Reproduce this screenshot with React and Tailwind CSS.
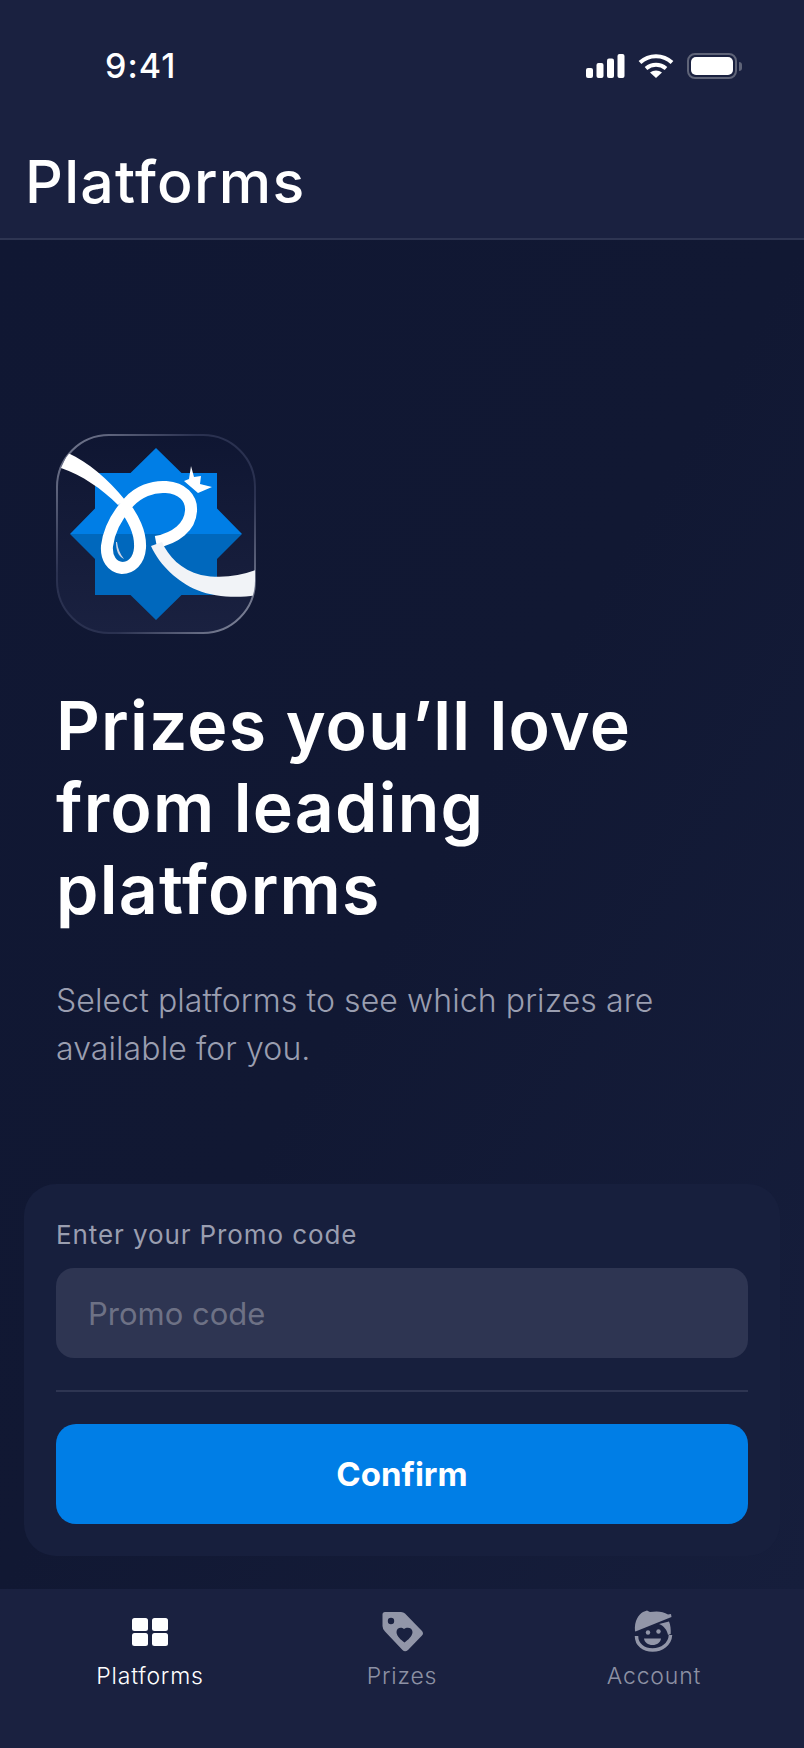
import React from 'react';

const SignalIcon = () => (
  <svg width="39" height="24" viewBox="0 0 39 24" fill="#fff">
    <rect x="0" y="14" width="7" height="10" rx="2" />
    <rect x="10.500" y="9" width="7" height="15" rx="2" />
    <rect x="21" y="4.500" width="7" height="19.500" rx="2" />
    <rect x="31.500" y="0" width="7" height="24" rx="2" />
  </svg>
);

const WifiIcon = () => (
  <svg width="36" height="24" viewBox="0 0 36 24" fill="none" stroke="#fff" strokeWidth="4">
    <path d="M2 8.500 C11 0 25 0 34 8.500" />
    <path d="M8 14.500 C14 9.500 22 9.500 28 14.500" />
    <path d="M18 24 L12 18.500 C15.500 15.700 20.500 15.700 24 18.500 Z" fill="#fff" stroke="none" />
  </svg>
);

const BatteryIcon = () => (
  <div className="flex items-center gap-[2px]">
    <div className="w-[50px] h-[26px] rounded-[8px] border-2 border-[#5f6478] p-[2px]">
      <div className="w-full h-full rounded-[5px] bg-white" />
    </div>
    <div className="w-[3px] h-[9px] rounded-r-full bg-[#5f6478]" />
  </div>
);

const AppLogo = () => (
  <svg width="200" height="200" viewBox="0 0 200 200" className="block">
    <defs>
      <linearGradient id="tile" x1="0" y1="0" x2="0" y2="1">
        <stop offset="0" stopColor="#0f1632" />
        <stop offset="1" stopColor="#1a2140" />
      </linearGradient>
      <linearGradient id="edge" x1="0" y1="0" x2="1" y2="1">
        <stop offset="0" stopColor="#7d8297" />
        <stop offset="0.35" stopColor="#2a3150" />
        <stop offset="0.65" stopColor="#2a3150" />
        <stop offset="1" stopColor="#8b90a3" />
      </linearGradient>
      <linearGradient id="star" x1="0" y1="0" x2="0" y2="1">
        <stop offset="0" stopColor="#007ee6" />
        <stop offset="0.5" stopColor="#007ee6" />
        <stop offset="0.5" stopColor="#0068bd" />
        <stop offset="1" stopColor="#0068bd" />
      </linearGradient>
      <clipPath id="tileClip">
        <rect x="1" y="1" width="198" height="198" rx="52" />
      </clipPath>
    </defs>
    <rect x="1" y="1" width="198" height="198" rx="52" fill="url(#tile)" stroke="url(#edge)" strokeWidth="2" />
    <g clipPath="url(#tileClip)">
      <path
        d="M100 14 L125.500 39 L161 39 L161 74.500 L186 100 L161 125 L161 161 L125.500 161 L100 186 L74.500 161 L39 161 L39 125 L14 100 L39 74.500 L39 39 L74.500 39 Z"
        fill="url(#star)"
      />
      <path d="M12 19 C32 28 52 45 69 66 L62 71 C46 55 26 41 5 34 Z" fill="#fff" />
      <path
        d="M67 70 C77 84 85 98 84 114 C83 127 75 134 66 134 C56 133 50 124 51 112 C53 96 62 80 73 68 C82 58 96 52 110 53 C126 54 136 64 135 77 C134 93 120 104 100 108"
        fill="none"
        stroke="#fff"
        strokeWidth="12"
      />
      <path
        d="M95 112 L106 108 C112 122 125 136 145 141 C165 145 183 142 200 136 L200 161 C185 164 160 164 141 156 C122 148 104 132 95 112 Z"
        fill="#f1f3f7"
      />
      <path d="M135 32 L138 43 L145 42 L144 50 L156 53 L142 59 L128 47 L133 45 Z" fill="#fff" />
      <path d="M60 108 C60 116 62 122 68 125 C64 120 62 115 61 108 Z" fill="#cfd6e6" />
    </g>
  </svg>
);

const PlatformsIcon = ({ color }) => (
  <svg width="38" height="30" viewBox="0 0 38 30" fill={color}>
    <rect x="1" y="1" width="16" height="13" rx="2.500" />
    <rect x="21" y="1" width="16" height="13" rx="2.500" />
    <rect x="1" y="16" width="16" height="13" rx="2.500" />
    <rect x="21" y="16" width="16" height="13" rx="2.500" />
  </svg>
);

const PrizesIcon = ({ color }) => (
  <svg width="46" height="46" viewBox="0 0 46 46" fill={color}>
    <path
      fillRule="evenodd"
      d="M6 3 H22 Q24.500 3 26 4.500 L43 22 Q45 24.500 43 26.500 L29 41 Q26 43.500 23.500 41 L6 22.500 Q3.500 20 3.500 17 V5.500 Q3.500 3 6 3 Z M12 8.800 A3.200 3.200 0 1 0 12 15.200 A3.200 3.200 0 1 0 12 8.800 Z M25 20 C22.500 17.500 17.500 18.500 17.500 23 C17.500 27 22 31 25.500 33.500 C29 31 33.500 27 33.500 23 C33.500 18.500 28 17.500 25 20 Z"
    />
  </svg>
);

const AccountIcon = ({ color }) => (
  <svg width="46" height="46" viewBox="12 9 46 46" fill={color}>
    <path d="M16 31 C15 21 20 14 24 12 L28 10.500 L31 12 C37 11 44 11 49 14.500 L52 14 L52.500 17 L16.500 31.500 Z" />
    <path d="M40 24 L50 21.500 C51.500 25 52 30 51.700 34 L49 35 C48 30 45 26 40 24 Z" />
    <path d="M17.500 36 C17.500 45 25 50 33.500 50 C43 50 51 44 51.500 35" fill="none" stroke={color} strokeWidth="3.500" />
    <circle cx="29" cy="32.500" r="2.200" />
    <circle cx="39.500" cy="31.500" r="2.200" />
    <path d="M25 38.500 H42 C41.500 42.500 38 45 33.500 45 C29 45 25.500 42.500 25 38.500 Z" />
  </svg>
);

const tabs = [
  { label: 'Platforms', Icon: PlatformsIcon, color: '#ffffff', textClass: 'text-white' },
  { label: 'Prizes', Icon: PrizesIcon, color: '#9296a8', textClass: 'text-[#8d91a4]' },
  { label: 'Account', Icon: AccountIcon, color: '#9296a8', textClass: 'text-[#8d91a4]' },
];

export default function App() {
  return (
    <div className="w-full h-[1748px] flex flex-col bg-[#111833] font-['Inter',sans-serif] overflow-hidden">
      <header className="h-[240px] shrink-0 bg-[#1a2140] border-b-2 border-[#2e3552]">
        <div className="h-[152px] pt-[52px] pl-[105px] pr-[62px] flex justify-between items-start">
          <span className="text-[34px] leading-[26px] mt-[1px] font-medium tracking-[1px] text-white">9:41</span>
          <div className="flex items-center gap-[13px] pt-[1px]">
            <SignalIcon />
            <WifiIcon />
            <BatteryIcon />
          </div>
        </div>
        <h1 className="pl-[25px] text-[59px] leading-[60px] font-medium tracking-[1.300px] text-white">Platforms</h1>
      </header>

      <main className="flex-1 flex flex-col px-[24px] bg-linear-to-br from-[#101733] via-[#111833] to-[#161e3c]">
        <section className="pl-[32px] pt-[194px]">
          <AppLogo />
          <h2 className="mt-[50px] w-[690px] text-[68px] leading-[82px] font-semibold tracking-[1.200px] text-white">
            Prizes you’ll love from leading platforms
          </h2>
          <p className="mt-[47px] w-[640px] text-[32px] leading-[48px] font-light tracking-[0.100px] text-[#9a9eb0]">
            Select platforms to see which prizes are available for you.
          </p>
        </section>

        <section className="mt-auto mb-[33px] h-[372px] rounded-[32px] bg-[#171f3d] px-[32px] pt-[36px]">
          <label className="block text-[26px] leading-[30px] font-normal tracking-[0.900px] text-[#9a9eb0]">Enter your Promo code</label>
          <input
            type="text"
            placeholder="Promo code"
            className="mt-[18px] block w-full h-[90px] rounded-[18px] bg-[#2e3552] px-[32px] text-[31px] text-white outline-none placeholder:text-[#6d7185]"
          />
          <div className="mt-[32px] h-[2px] bg-[#2e3552]" />
          <button className="mt-[32px] pt-[2px] w-full h-[100px] rounded-[20px] bg-[#007ee6] text-[33px] font-bold text-white">
            Confirm
          </button>
        </section>
      </main>

      <nav className="h-[159px] shrink-0 bg-[#1a2140] px-[24px] grid grid-cols-3">
        {tabs.map(({ label, Icon, color, textClass }) => (
          <div key={label} className="flex flex-col items-center pt-[20px]">
            <div className="h-[46px] flex items-center justify-center">
              <Icon color={color} />
            </div>
            <span className={`mt-[6px] text-[23px] leading-[30px] font-light tracking-[0.800px] ${textClass}`}>{label}</span>
          </div>
        ))}
      </nav>
    </div>
  );
}
